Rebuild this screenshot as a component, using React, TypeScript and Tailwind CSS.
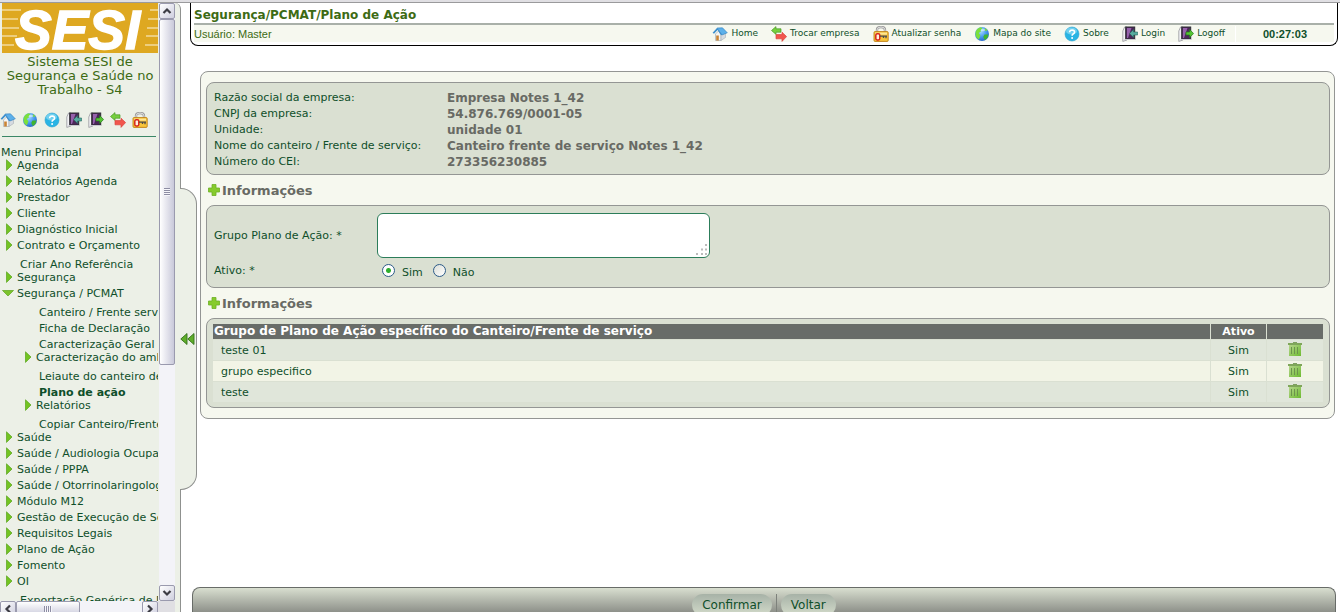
import { useState } from "react";
import type { ReactNode } from "react";

type IconProps = { className?: string };

const HomeIcon = ({ className = "size-4 shrink-0" }: IconProps) => (
  <svg viewBox="0 0 16 16" className={className} aria-hidden="true">
    <path d="M3.5 8 L6.5 5 L9 8.5 V14.5 H3.5 Z" fill="#f4f4f4" stroke="#9aa3ab" strokeWidth=".6" />
    <path d="M9 8.5 L13.5 7.5 V11.5 L9 14.5 Z" fill="#d6dbe0" stroke="#9aa3ab" strokeWidth=".5" />
    <path d="M5 2 L10.5 1.8 L15.3 6.8 L9.8 9 Z" fill="#5cb0ea" stroke="#2f7fc0" strokeWidth=".6" />
    <path d="M5 2 L0.6 6.8 L2 7.8 L5.6 4 L9 9.2 L10 8.6 Z" fill="#3d8fce" />
    <rect x="4.2" y="9.5" width="2.6" height="5" fill="#c98334" />
  </svg>
);

const GlobeIcon = ({ className = "size-4 shrink-0" }: IconProps) => (
  <svg viewBox="0 0 16 16" className={className} aria-hidden="true">
    <defs>
      <radialGradient id="sea" cx=".4" cy=".3" r=".8">
        <stop offset="0" stopColor="#a8dcff" />
        <stop offset=".5" stopColor="#4a9cf0" />
        <stop offset="1" stopColor="#1f5cc4" />
      </radialGradient>
    </defs>
    <circle cx="8" cy="8" r="7" fill="url(#sea)" />
    <path d="M1.6 6 Q3 2 7 1.2 L8.5 2.6 L6.5 4.2 L7 5.5 L4.6 7 L6.4 9.3 L5.6 11.6 L4.8 13.6 Q1 11.5 1.6 6 Z" fill="#7be03c" />
    <path d="M10.5 8.6 L14.4 8.6 Q14 12.3 10.8 14 L9.2 11 Z" fill="#3fb430" />
    <path d="M11 2 L13.5 4 L12 5.2 L10.6 4 Z" fill="#79d54a" />
    <ellipse cx="9" cy="4" rx="2" ry="1.3" fill="#fff" opacity=".5" />
  </svg>
);

const HelpIcon = ({ className = "size-4 shrink-0" }: IconProps) => (
  <svg viewBox="0 0 16 16" className={className} aria-hidden="true">
    <circle cx="8" cy="8" r="7" fill="#29b4e4" stroke="#2a9fce" strokeWidth=".6" />
    <ellipse cx="7.5" cy="5" rx="5.5" ry="3.6" fill="#8fdcf3" opacity=".7" />
    <path d="M5.6 6.2 Q5.8 4 8.2 4 Q10.6 4.1 10.5 6.2 Q10.4 7.4 9.1 8 Q8.1 8.5 8.1 9.8" fill="none" stroke="#fff" strokeWidth="1.6" />
    <circle cx="8.1" cy="12" r="1" fill="#fff" />
  </svg>
);

const Door = ({ className, children }: { className: string; children: ReactNode }) => (
  <svg viewBox="0 0 16 16" className={className} aria-hidden="true">
    <path d="M0.8 5 L2.6 1 H5 V14 L0.8 15.4 Z" fill="#f2f2f4" stroke="#8a8a92" strokeWidth=".7" />
    <rect x="3.7" y="1" width="9" height="12" fill="#4b2758" stroke="#2e2e34" strokeWidth="1" />
    <path d="M5 2 H9.5 L6 12 H5 Z" fill="#9561ab" />
    <path d="M2.5 13.5 H13.5" stroke="#c9c9cf" strokeWidth="1" />
    {children}
  </svg>
);

const LoginIcon = ({ className = "size-4 shrink-0" }: IconProps) => (
  <Door className={className}>
    <path d="M7.6 7.5 L11.6 3.5 V6 H15.6 V9 H11.6 V11.5 Z" fill="#58ac9f" stroke="#25695f" strokeWidth=".6" />
  </Door>
);

const LogoffIcon = ({ className = "size-4 shrink-0" }: IconProps) => (
  <Door className={className}>
    <path d="M15.6 7.5 L11.6 3.5 V6 H8 V9 H11.6 V11.5 Z" fill="#55c433" stroke="#23771a" strokeWidth=".7" />
  </Door>
);

const SwapIcon = ({ className = "size-4 shrink-0" }: IconProps) => (
  <svg viewBox="0 0 16 16" className={className} aria-hidden="true">
    <path d="M0.5 4.5 L5 0.6 V2.8 H10 V6.2 H5 V8.4 Z" fill="#76cf3e" stroke="#4a9a25" strokeWidth=".7" />
    <path d="M15.6 10.6 L11 6.2 V8.6 H5 V12.8 H11 V15.4 Z" fill="#f2564d" stroke="#d9443d" strokeWidth=".7" />
  </svg>
);

const LockIcon = ({ className = "size-4 shrink-0" }: IconProps) => (
  <svg viewBox="0 0 16 16" className={className} aria-hidden="true">
    <path d="M4 7 V4 Q4 1 8 1 Q12 1 12 4 V7" fill="none" stroke="#9b9b9b" strokeWidth="2.4" />
    <path d="M4 7 V4 Q4 1 8 1 Q12 1 12 4 V7" fill="none" stroke="#dedede" strokeWidth="1" />
    <rect x="1" y="5.6" width="14.2" height="9.8" rx="1" fill="#f8c53a" stroke="#c07f14" strokeWidth=".9" />
    <rect x="2" y="6.6" width="12" height="2" fill="#fde695" />
    <rect x="2.8" y="7.8" width="4" height="6.2" rx="1.4" fill="#fff0e0" stroke="#d8261c" strokeWidth="1.5" />
    <path d="M7 10.2 H14 M10.5 10.2 V12 M13 10.2 V12.2" stroke="#4c4c4c" strokeWidth="1.3" />
  </svg>
);

const PlusIcon = () => (
  <svg viewBox="0 0 12 12" className="mb-[2px] size-3 shrink-0" aria-hidden="true">
    <path d="M4 .5 H8 V4 H11.5 V8 H8 V11.5 H4 V8 H.5 V4 H4 Z" fill="#86cb2c" stroke="#6db024" strokeWidth=".8" />
  </svg>
);

const TrashIcon = () => (
  <svg viewBox="0 0 14 14" className="h-[14px] w-[14px]" aria-hidden="true">
    <defs>
      <linearGradient id="bin" x1="0" y1="0" x2="1" y2="1">
        <stop offset="0" stopColor="#b5d58b" />
        <stop offset="1" stopColor="#6dbb30" />
      </linearGradient>
    </defs>
    <rect x="5" y="0" width="4" height="1" fill="#7f9f62" />
    <rect x="0" y="1" width="14" height="2" fill="#7fa65a" />
    <rect x="1" y="3" width="12" height="11" fill="url(#bin)" />
    <path d="M3.5 5 V12 M6.5 5 V12 M9.5 5 V12" stroke="#6c944c" strokeWidth="1" />
  </svg>
);

const Arrow = ({ open }: { open?: boolean }) =>
  open ? (
    <svg viewBox="0 0 12 12" className="-ml-1 size-3 shrink-0" aria-hidden="true">
      <path d="M.5 3.5 H11.5 L6 9 Z" fill="#7cc32c" stroke="#5da51d" strokeWidth=".7" />
    </svg>
  ) : (
    <svg viewBox="0 0 8 12" className="h-3 w-2 shrink-0" aria-hidden="true">
      <path d="M.5 .8 L6 6 L.5 11.4 Z" fill="#73c422" stroke="#58a31b" strokeWidth=".7" />
    </svg>
  );

const Logo = () => (
  <svg viewBox="0 0 156 50" className="h-[50px] w-[156px]" role="img" aria-label="SESI">
    <rect width="156" height="50" fill="#dea821" />
    <path
      d="M0 7 H19 M0 16 H16 M0 25 H17 M0 33 H15 M0 42 H12 M148 7 H156 M146 16 H156 M145 25 H156 M144 33 H156 M143 42 H156"
      stroke="#fbf3dc"
      strokeWidth="1.2"
    />
    <text x="13" y="46" fill="#fff" stroke="#fff" strokeWidth="1.4" fontFamily="Liberation Sans, sans-serif" fontSize="55" fontWeight="700" fontStyle="italic">
      SESI
    </text>
  </svg>
);

type MenuItem = {
  label: string;
  kind: "group" | "leaf" | "subgroup" | "subleaf";
  open?: boolean;
  active?: boolean;
};

const menu: MenuItem[] = [
  { label: "Agenda", kind: "group" },
  { label: "Relatórios Agenda", kind: "group" },
  { label: "Prestador", kind: "group" },
  { label: "Cliente", kind: "group" },
  { label: "Diagnóstico Inicial", kind: "group" },
  { label: "Contrato e Orçamento", kind: "group" },
  { label: "Criar Ano Referência", kind: "leaf" },
  { label: "Segurança", kind: "group" },
  { label: "Segurança / PCMAT", kind: "group", open: true },
  { label: "Canteiro / Frente serviço", kind: "subleaf" },
  { label: "Ficha de Declaração", kind: "subleaf" },
  { label: "Caracterização Geral", kind: "subleaf" },
  { label: "Caracterização do ambiente", kind: "subgroup" },
  { label: "Leiaute do canteiro de obras", kind: "subleaf" },
  { label: "Plano de ação", kind: "subleaf", active: true },
  { label: "Relatórios", kind: "subgroup" },
  { label: "Copiar Canteiro/Frente", kind: "subleaf" },
  { label: "Saúde", kind: "group" },
  { label: "Saúde / Audiologia Ocupacional", kind: "group" },
  { label: "Saúde / PPPA", kind: "group" },
  { label: "Saúde / Otorrinolaringologia", kind: "group" },
  { label: "Módulo M12", kind: "group" },
  { label: "Gestão de Execução de Serviços", kind: "group" },
  { label: "Requisitos Legais", kind: "group" },
  { label: "Plano de Ação", kind: "group" },
  { label: "Fomento", kind: "group" },
  { label: "OI", kind: "group" },
  { label: "Exportação Genérica de Dados", kind: "leaf" },
];

const kindClass = {
  group: "pl-[6px] leading-[18px]",
  leaf: "pl-[20px] leading-[24px]",
  subgroup: "pl-[25px] leading-[18px]",
  subleaf: "pl-[39px] leading-[24px]",
};

const links = [
  { label: "Home", Icon: HomeIcon },
  { label: "Trocar empresa", Icon: SwapIcon },
  { label: "Atualizar senha", Icon: LockIcon },
  { label: "Mapa do site", Icon: GlobeIcon },
  { label: "Sobre", Icon: HelpIcon },
  { label: "Login", Icon: LoginIcon },
  { label: "Logoff", Icon: LogoffIcon },
];

const shortcuts = [
  { label: "Home", Icon: HomeIcon },
  { label: "Mapa do site", Icon: GlobeIcon },
  { label: "Sobre", Icon: HelpIcon },
  { label: "Login", Icon: LoginIcon },
  { label: "Logoff", Icon: LogoffIcon },
  { label: "Trocar empresa", Icon: SwapIcon },
  { label: "Atualizar senha", Icon: LockIcon },
];

const company = [
  ["Razão social da empresa:", "Empresa Notes 1_42"],
  ["CNPJ da empresa:", "54.876.769/0001-05"],
  ["Unidade:", "unidade 01"],
  ["Nome do canteiro / Frente de serviço:", "Canteiro frente de serviço Notes 1_42"],
  ["Número do CEI:", "273356230885"],
];

const groups = ["teste 01", "grupo especifico", "teste"];

const ScrollButton = ({ label, path }: { label: string; path: string }) => (
  <button
    type="button"
    aria-label={label}
    className="flex size-4 shrink-0 items-center justify-center rounded-xs border border-[#9a9aae] bg-linear-to-br from-white to-[#cfcfdf]"
  >
    <svg viewBox="0 0 10 10" className="size-[10px]" aria-hidden="true">
      <path d={path} fill="none" stroke="#3c3c44" strokeWidth="2.2" />
    </svg>
  </button>
);

const Sidebar = () => (
  <aside className="relative flex w-[181px] shrink-0 flex-col rounded-tr-md border-r border-[#8f918f] bg-[#ecf0e7]">
    <div className="flex min-h-0 flex-1">
      <div className="min-w-0 flex-1 overflow-hidden pr-px">
        <div className="pl-[2px]">
          <Logo />
          <p className="pt-[2px] text-center text-[13px] leading-[14px] text-[#3d6b14]">
            Sistema SESI de Segurança e Saúde no Trabalho - S4
          </p>
        </div>
        <div className="mt-[15px] flex gap-[6px]">
          {shortcuts.map(({ label, Icon }) => (
            <a key={label} href="#" title={label} aria-label={label}>
              <Icon />
            </a>
          ))}
        </div>
        <div className="mx-[2px] mt-2 border-t border-[#3a8766]" />
        <p className="mt-3 pl-px text-[11px] leading-[8px]">Menu Principal</p>
        <nav className="overflow-hidden text-[11px]">
          {menu.map((item) => (
            <a
              key={item.label}
              href="#"
              className={`flex h-4 whitespace-nowrap ${kindClass[item.kind]} ${item.active ? "font-bold" : ""}`}
            >
              {item.kind.endsWith("group") && (
                <span className="mr-[3px] flex items-center">
                  <Arrow open={item.open} />
                </span>
              )}
              {item.label}
            </a>
          ))}
        </nav>
      </div>
      <div className="mr-[5px] flex w-4 shrink-0 flex-col bg-[#f3f3f8]">
        <ScrollButton label="Rolar para cima" path="M1.5 7 L5 3.5 L8.5 7" />
        <div className="flex h-[346px] items-center justify-center rounded-xs border border-[#9a9aae] bg-linear-to-r from-white to-[#c9c9da]">
          <span className="h-2 w-[6px] bg-[repeating-linear-gradient(to_bottom,#8d8da3_0_1px,#f5f5fa_1px_2px)]" />
        </div>
        <div className="flex-1" />
        <ScrollButton label="Rolar para baixo" path="M1.5 3 L5 6.5 L8.5 3" />
      </div>
    </div>
    <div className="mr-[5px] flex h-[11px] overflow-hidden bg-[#e0dfe3]">
      <div className="flex w-[158px] bg-[#f3f3f8]">
        <ScrollButton label="Rolar para a esquerda" path="M7 1.5 L3.5 5 L7 8.5" />
        <div className="flex h-4 w-16 items-center justify-center rounded-xs border border-[#9a9aae] bg-linear-to-b from-white to-[#c9c9da]">
          <span className="h-[6px] w-2 bg-[repeating-linear-gradient(to_right,#8d8da3_0_1px,#f5f5fa_1px_2px)]" />
        </div>
        <div className="flex-1" />
        <ScrollButton label="Rolar para a direita" path="M3 1.5 L6.5 5 L3 8.5" />
      </div>
    </div>
    {/* tab that hides the menu */}
    <button
      type="button"
      aria-label="Recolher menu"
      className="absolute top-[185px] left-[180px] flex h-[302px] w-[17px] items-center rounded-r-2xl border border-l-0 border-[#8f918f] bg-[#ecf0e7]"
    >
      <svg viewBox="0 0 15 12" className="h-3 w-[15px]" aria-hidden="true">
        <path d="M7 .5 V11.5 L.8 6 Z M14 .5 V11.5 L7.8 6 Z" fill="#5fae2a" stroke="#33701c" strokeWidth=".9" />
      </svg>
    </button>
  </aside>
);

const Panel = ({ className = "", children }: { className?: string; children: ReactNode }) => (
  <section className={`rounded-lg border border-[#949694] bg-[#dae0d2] ${className}`}>{children}</section>
);

const SectionTitle = () => (
  <h2 className="flex h-[30px] items-center gap-[2px] pt-[2px] pl-[2px] text-[13px] font-bold text-[#686a64]">
    <PlusIcon />
    Informações
  </h2>
);

const App = () => {
  const [text, setText] = useState("");
  const [active, setActive] = useState("sim");

  return (
    <div className="flex h-screen flex-col overflow-hidden bg-white font-['DejaVu_Sans',Verdana,sans-serif] text-[#0f4f2a]">
      <div className="h-[3px] shrink-0 border-b border-[#9a9a9c] bg-[#e0dfe3]" />
      <div className="flex min-h-0 flex-1">
        <Sidebar />
        <div className="flex min-w-0 flex-1 flex-col pr-[2px] pl-[9px]">
          <header className="rounded-b-lg border border-t-0 border-black px-[3px] pb-[3px]">
            <h1 className="h-5 text-[12px] leading-[24px] font-bold text-[#3d6b14]">Segurança/PCMAT/Plano de Ação</h1>
            <div className="flex h-[19px] items-center border-t-2 border-[#a9b0a9] bg-[#f6f8ef] pt-px">
              <p className="font-['Liberation_Sans',Arial,sans-serif] text-[11px] text-[#3d6b14]">Usuário: Master</p>
              <nav className="ml-auto flex gap-[13px] border-r border-white pr-[10px] text-[9px]">
                {links.map(({ label, Icon }) => (
                  <a key={label} href="#" className="flex items-center gap-[3px] whitespace-nowrap">
                    <Icon />
                    {label}
                  </a>
                ))}
              </nav>
              <time className="w-[98px] text-center font-['Liberation_Sans',Arial,sans-serif] text-[11px] font-bold">
                00:27:03
              </time>
            </div>
          </header>

          <main className="mt-[25px] mr-[3px] ml-[10px] rounded-lg border border-[#949694] bg-[#f6f8ef] pt-[10px] pr-1 pb-[10px] pl-[5px] text-[11px]">
            <Panel className="px-[7px] pt-[7px] pb-1">
              <dl className="grid grid-cols-[233px_1fr] leading-4">
                {company.map(([label, value]) => (
                  <div key={label} className="contents">
                    <dt>{label}</dt>
                    <dd className="text-[12px] font-bold text-[#686a64]">{value}</dd>
                  </div>
                ))}
              </dl>
            </Panel>

            <SectionTitle />
            <Panel className="px-[7px] pt-[7px] pb-1">
              <div className="flex items-center">
                <label htmlFor="grupo" className="w-[163px] pt-[2px]">
                  Grupo Plano de Ação: *
                </label>
                <div className="relative">
                  <textarea
                    id="grupo"
                    value={text}
                    onChange={(e) => setText(e.target.value)}
                    className="block h-[45px] w-[333px] resize-none rounded-md border border-[#2c7d5a] bg-white p-1"
                  />
                  <svg viewBox="0 0 12 12" className="absolute right-[2px] bottom-[2px] size-3" aria-hidden="true">
                    <path d="M9 0h2v2h-2z M5 4.500h2v2h-2z M9 4.500h2v2h-2z M0 9h2v2h-2z M5 9h2v2h-2z M9 9h2v2h-2z" fill="#bcbcbc" />
                  </svg>
                </div>
              </div>
              <fieldset className="flex h-[25px] items-center">
                <legend className="float-left w-[168px] leading-[28px]">Ativo: *</legend>
                {["Sim", "Não"].map((option) => (
                  <label key={option} className="mr-[10px] flex items-center gap-[7px]">
                    <input
                      type="radio"
                      name="ativo"
                      checked={active === option.toLowerCase()}
                      onChange={() => setActive(option.toLowerCase())}
                      className="size-[13px] appearance-none rounded-full border border-[#2b5a86] bg-white bg-linear-to-br from-[#dcdfd8] to-white checked:bg-[radial-gradient(circle,#2fae2f_0_2px,#fff_3px)]"
                    />
                    <span className="pt-[5px]">{option}</span>
                  </label>
                ))}
              </fieldset>
            </Panel>

            <SectionTitle />
            <Panel className="px-[6px] pt-[5px] pb-[5px]">
              <table className="w-full border-separate border-spacing-0">
                <thead>
                  <tr className="text-[12px] leading-[15px] text-white">
                    <th className="border-r border-[#dae0d2] bg-[#686c68] p-0 pl-px text-left">
                      Grupo de Plano de Ação específico do Canteiro/Frente de serviço
                    </th>
                    <th className="w-14 border-r border-[#dae0d2] bg-[#686c68] p-0 text-[11px]">Ativo</th>
                    <th className="w-14 bg-[#686c68] p-0" aria-label="Excluir" />
                  </tr>
                </thead>
                <tbody>
                  {groups.map((name) => (
                    <tr key={name} className="h-[21px] bg-[#e0e6da] even:bg-[#f2f4e6]">
                      <td className="border-t border-r border-[#dae0d2] p-0 pt-[2px] pl-2">{name}</td>
                      <td className="border-t border-r border-[#dae0d2] p-0 pt-[2px] text-center">Sim</td>
                      <td className="border-t border-[#dae0d2] p-0 pt-[2px] align-top">
                        <button type="button" aria-label={`Excluir ${name}`} className="mx-auto block">
                          <TrashIcon />
                        </button>
                      </td>
                    </tr>
                  ))}
                </tbody>
              </table>
            </Panel>
          </main>

          <footer className="mt-auto mr-[2px] ml-[2px] flex h-[25px] shrink-0 items-start justify-center gap-1 overflow-hidden rounded-t-lg border border-b-0 border-[#686c68] bg-linear-to-b from-[#d9dfd0] to-[#8e918a] pt-[6px] text-[12px]">
            <button type="button" className="h-[22px] rounded-full bg-linear-to-b from-[#a7b2a7] to-[#d4dccb] px-[10px]">
              Confirmar
            </button>
            <span className="h-full w-px bg-[#7d817b]" />
            <button type="button" className="h-[22px] rounded-full bg-linear-to-b from-[#a7b2a7] to-[#d4dccb] px-[10px]">
              Voltar
            </button>
          </footer>
        </div>
      </div>
    </div>
  );
};

export default App;
